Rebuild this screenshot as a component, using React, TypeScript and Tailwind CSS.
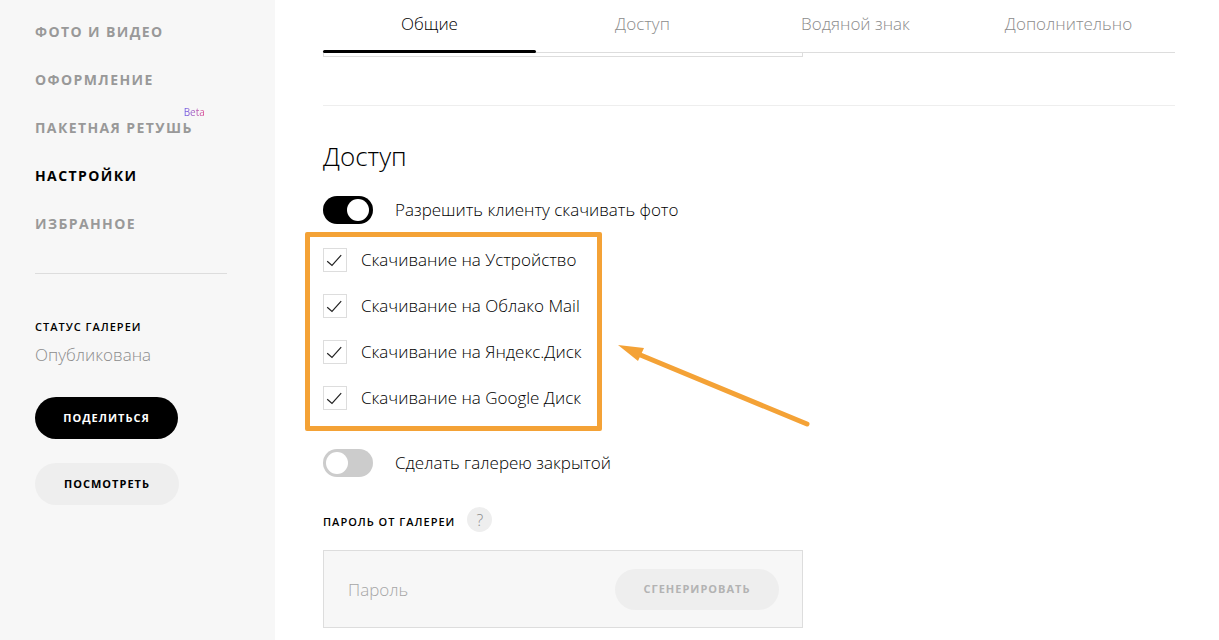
import { useState } from "react";
import clsx from "clsx";

const menu = [
  { title: "Фото и видео" },
  { title: "Оформление" },
  { title: "Пакетная ретушь", beta: true },
  { title: "Настройки", active: true },
  { title: "Избранное" },
];

const tabs = ["Общие", "Доступ", "Водяной знак", "Дополнительно"];

const downloads = [
  "Скачивание на Устройство",
  "Скачивание на Облако Mail",
  "Скачивание на Яндекс.Диск",
  "Скачивание на Google Диск",
];

function Sidebar() {
  return (
    <aside className="w-[275px] shrink-0 bg-[#f7f7f7] px-[35px] pt-5">
      <nav className="flex flex-col items-start gap-6">
        {menu.map(({ title, beta, active }) => (
          <a
            key={title}
            href="#"
            className={clsx(
              "relative text-sm leading-6 font-bold tracking-widest whitespace-nowrap uppercase",
              active ? "text-black" : "text-[#999]"
            )}
          >
            {title}
            {beta && (
              <span
                className="absolute -top-[10px] -right-3 bg-gradient-to-r from-[#6a5be8] to-[#e0478f] bg-clip-text
                text-[10px] leading-3 font-normal tracking-normal text-transparent normal-case"
              >
                Beta
              </span>
            )}
          </a>
        ))}
      </nav>
      <hr className="mt-[37px] mr-[13px] border-[#ddd]" />
      <div className="mt-[45px] text-[11px] leading-4 font-semibold tracking-[1px] uppercase">
        Статус галереи
      </div>
      <div className="mt-2 text-[17px] leading-6 font-light text-[#8c8c8c]">
        Опубликована
      </div>
      <div className="mt-[30px] flex flex-col items-start gap-6">
        <button className="h-[42px] w-[143px] rounded-full bg-black text-[11px] font-bold tracking-[1px] text-white uppercase">
          Поделиться
        </button>
        <button className="h-[42px] w-36 rounded-full bg-[#eee] text-[11px] font-bold tracking-[1px] uppercase">
          Посмотреть
        </button>
      </div>
    </aside>
  );
}

interface FieldProps {
  label: string;
  checked?: boolean;
}

function Toggle({ label, checked }: FieldProps) {
  return (
    <label className="flex items-center gap-[22px] text-[17px] leading-7 font-light">
      <input
        type="checkbox"
        role="switch"
        defaultChecked={checked}
        className="flex h-7 w-[50px] appearance-none items-center rounded-full bg-[#ccc] px-[3px]
        before:size-[22px] before:rounded-full before:bg-white checked:justify-end checked:bg-black checked:px-1"
      />
      {label}
    </label>
  );
}

function Checkbox({ label, checked }: FieldProps) {
  return (
    <label className="flex items-center gap-[14px] text-[17px] leading-6 font-light">
      <span className="grid size-6 *:[grid-area:1/1]">
        <input
          type="checkbox"
          defaultChecked={checked}
          className="peer size-6 appearance-none border border-[#ddd] bg-white"
        />
        <svg
          viewBox="0 0 24 24"
          className="pointer-events-none invisible size-6 fill-none stroke-[#222] peer-checked:visible"
        >
          <path d="M4.2 13.2 9 17.4 18.2 7.2" strokeWidth="1.2" />
        </svg>
      </span>
      {label}
    </label>
  );
}

export default function App() {
  const [tab, setTab] = useState(0);

  return (
    <div className="flex min-h-screen bg-white font-['Open_Sans','Noto_Sans',sans-serif] text-black">
      <Sidebar />
      <main className="min-w-0 flex-1 pr-11 pb-3 pl-12">
        <div role="tablist" className="flex h-[53px] shadow-[inset_0_-1px_0_#ddd]">
          {tabs.map((name, i) => (
            <button
              key={name}
              role="tab"
              aria-selected={i === tab}
              onClick={() => setTab(i)}
              className={clsx(
                "flex flex-1 flex-col items-center justify-between pt-3 text-[17px] leading-6 font-light",
                i === tab ? "text-black" : "text-[#8c8c8c]"
              )}
            >
              {name}
              {i === tab && <span className="h-[3px] w-full rounded-xs bg-black" />}
            </button>
          ))}
        </div>
        {/* bottom edge of the field scrolled under the tabs */}
        <div className="h-1 max-w-[480px] border-x border-b border-[#ddd]" />
        <hr className="mt-12 border-[#eee]" />

        <h2 className="mt-[34px] mb-6 text-[26px] leading-8 font-light">Доступ</h2>
        <Toggle label="Разрешить клиенту скачивать фото" checked />

        <div
          className="relative mt-2 mb-[18px] -ml-[18px] flex w-[297px] flex-col gap-[22px] rounded-xs border-5
          border-[#f4a236] px-[13px] pt-[11px] pb-4"
        >
          {downloads.map((label) => (
            <Checkbox key={label} label={label} checked />
          ))}
          <svg
            viewBox="0 0 192 84"
            className="pointer-events-none absolute top-[107px] left-[308px] h-[84px] w-48 fill-[#f4a236]"
          >
            <path d="M0 1 26 4 20 17Z" />
            <path
              d="M20 10 189 80"
              className="stroke-[#f4a236]"
              strokeWidth="5"
              strokeLinecap="round"
            />
          </svg>
        </div>

        <Toggle label="Сделать галерею закрытой" />

        <div className="mt-[30px] flex gap-3">
          <label
            htmlFor="password"
            className="pt-[7px] text-[11px] leading-4 font-semibold tracking-[1px] uppercase"
          >
            Пароль от галереи
          </label>
          <button className="size-[25px] rounded-full bg-[#eee] text-base leading-6 font-light text-[#8c8c8c]">
            ?
          </button>
        </div>
        <div className="mt-[18px] flex h-[78px] max-w-[480px] items-center border border-[#ddd] bg-[#f7f7f7] pr-[23px] pl-6">
          <input
            id="password"
            type="text"
            placeholder="Пароль"
            className="h-full min-w-0 flex-1 bg-transparent text-[17px] font-light outline-none placeholder:text-[#a6a6a6]"
          />
          <button className="h-[41px] w-[164px] rounded-full bg-[#eee] text-[11px] font-bold tracking-[1px] text-[#b3b3b3] uppercase">
            Сгенерировать
          </button>
        </div>
      </main>
    </div>
  );
}
